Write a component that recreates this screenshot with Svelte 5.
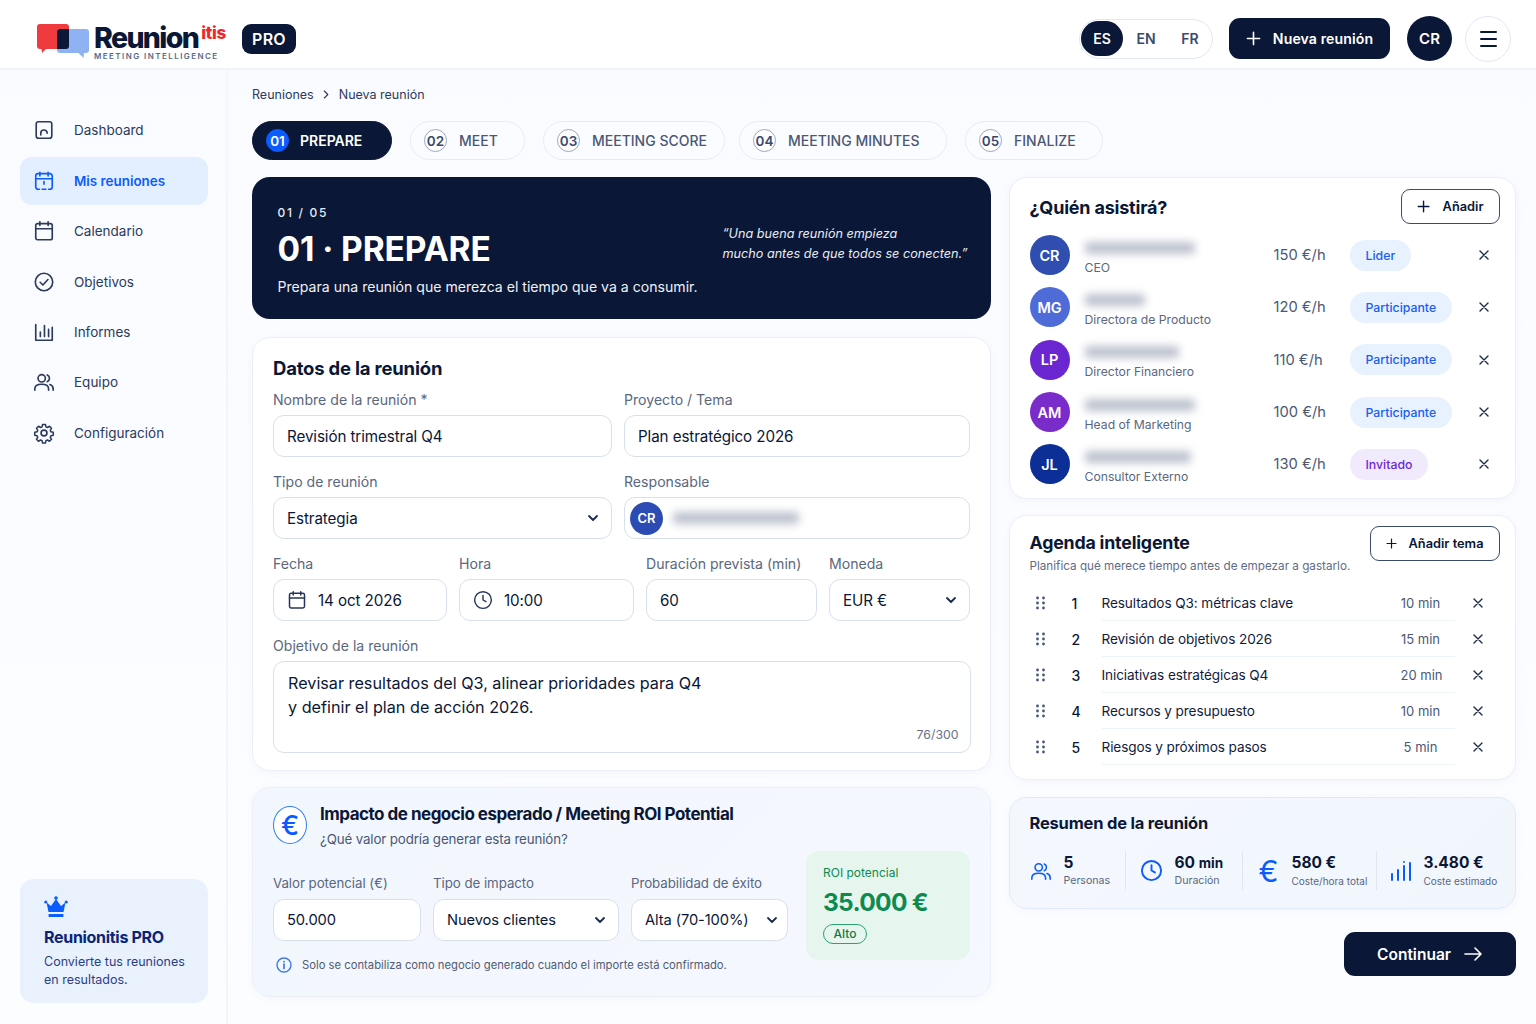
<script>
  const nav = [
    { label: 'Dashboard', icon: 'dash' },
    { label: 'Mis reuniones', icon: 'meet', active: true },
    { label: 'Calendario', icon: 'cal' },
    { label: 'Objetivos', icon: 'check' },
    { label: 'Informes', icon: 'chart' },
    { label: 'Equipo', icon: 'team' },
    { label: 'Configuración', icon: 'gear' }
  ];
  const steps = [
    { n: '01', t: 'PREPARE', active: true },
    { n: '02', t: 'MEET' },
    { n: '03', t: 'MEETING SCORE' },
    { n: '04', t: 'MEETING MINUTES' },
    { n: '05', t: 'FINALIZE' }
  ];
  const people = [
    { i: 'CR', w: 110, role: 'CEO', rate: '150 €/h', tag: 'Lider', kind: 'blue', c: 'cr' },
    { i: 'MG', w: 60, role: 'Directora de Producto', rate: '120 €/h', tag: 'Participante', kind: 'blue', c: 'mg' },
    { i: 'LP', w: 94, role: 'Director Financiero', rate: '110 €/h', tag: 'Participante', kind: 'blue', c: 'lp' },
    { i: 'AM', w: 110, role: 'Head of Marketing', rate: '100 €/h', tag: 'Participante', kind: 'blue', c: 'am' },
    { i: 'JL', w: 106, role: 'Consultor Externo', rate: '130 €/h', tag: 'Invitado', kind: 'purple', c: 'jl' }
  ];
  const agenda = [
    ['1', 'Resultados Q3: métricas clave', '10 min'],
    ['2', 'Revisión de objetivos 2026', '15 min'],
    ['3', 'Iniciativas estratégicas Q4', '20 min'],
    ['4', 'Recursos y presupuesto', '10 min'],
    ['5', 'Riesgos y próximos pasos', '5 min']
  ];
</script>

{#snippet chevron()}
  <svg class="chev" viewBox="0 0 12 12" width="12" height="12"><path d="M2 4l4 4 4-4" fill="none" stroke="currentColor" stroke-width="1.8" stroke-linecap="round" stroke-linejoin="round"/></svg>
{/snippet}
{#snippet plus(size = 16)}
  <svg viewBox="0 0 16 16" width={size} height={size}><path d="M8 1.500v13M1.500 8h13" fill="none" stroke="currentColor" stroke-width="1.700" stroke-linecap="round"/></svg>
{/snippet}
{#snippet cross()}
  <svg viewBox="0 0 10 10" width="10" height="10"><path d="M1 1l8 8M9 1l-8 8" fill="none" stroke="currentColor" stroke-width="1.400" stroke-linecap="round"/></svg>
{/snippet}
{#snippet clock(size = 20, sw = 1.7)}
  <svg viewBox="0 0 24 24" width={size} height={size} fill="none" stroke="currentColor" stroke-width={sw} stroke-linecap="round" stroke-linejoin="round"><circle cx="12" cy="12" r="10"/><path d="M12 6.500V12l3.500 2"/></svg>
{/snippet}
{#snippet team(size = 22, sw = 1.7)}
  <svg viewBox="0 0 24 24" width={size} height={size} fill="none" stroke="currentColor" stroke-width={sw} stroke-linecap="round" stroke-linejoin="round"><circle cx="9.500" cy="8" r="4"/><path d="M2 21v-1.500C2 16 5 14.500 9.500 14.500S17 16 17 19.500V21M15.500 4.300a4 4 0 0 1 0 7.400M18.500 14.800c2.200.7 3.500 2.200 3.500 4.700V21"/></svg>
{/snippet}
{#snippet navIcon(k)}
  <svg viewBox="0 0 24 24" width="22" height="22" fill="none" stroke="currentColor" stroke-width="1.800" stroke-linecap="round" stroke-linejoin="round">
    {#if k === 'dash'}
      <rect x="3.500" y="3" width="17" height="18" rx="2.500"/><path d="M8.500 17.500v-2a3.500 3.500 0 0 1 7 0"/>
    {:else if k === 'meet'}
      <path d="M7.500 2.500v4M16.500 2.500v4M3 9.500h18M7 21H5.500A2.500 2.500 0 0 1 3 18.500v-12A2.500 2.500 0 0 1 5.500 4h13A2.500 2.500 0 0 1 21 6.500v12a2.500 2.500 0 0 1-2.500 2.500H17M12 12.500v3M10 21h4"/>
    {:else if k === 'cal'}
      <rect x="3" y="4" width="18" height="17.500" rx="2"/><path d="M7.500 2v4M16.500 2v4M3 9.500h18"/>
    {:else if k === 'check'}
      <circle cx="12" cy="12" r="9.500"/><path d="M7.800 12.300l3 3 5.500-6"/>
    {:else if k === 'chart'}
      <path d="M3 4v17h18V7M8 17v-5M12.500 17V5M17 17v-8"/>
    {:else if k === 'team'}
      <circle cx="9.500" cy="8" r="4"/><path d="M2 21v-1.500C2 16 5 14.500 9.500 14.500S17 16 17 19.500V21M15.500 4.300a4 4 0 0 1 0 7.400M18.500 14.800c2.200.7 3.500 2.200 3.500 4.700V21"/>
    {:else}
      <circle cx="12" cy="12" r="3.200"/><path d="M10.300 2.500h3.400l.6 2.800 1.800.8 2.500-1.500 2.300 2.400-1.500 2.400.8 1.800 2.800.6v3.400l-2.800.6-.8 1.800 1.500 2.500-2.400 2.300-2.400-1.500-1.800.8-.6 2.800h-3.400l-.6-2.800-1.800-.8-2.500 1.500-2.300-2.400 1.500-2.400-.8-1.800-2.800-.6v-3.400l2.800-.6.8-1.800-1.500-2.500 2.400-2.300 2.400 1.500 1.800-.8z" transform="translate(12 12) scale(.92) translate(-12 -12.600)"/>
    {/if}
  </svg>
{/snippet}

<div class="page">
  <header class="top">
    <div class="brand">
      <div class="mark">
        <svg viewBox="0 0 52 36" width="52" height="36">
          <path d="M3 1h26a3 3 0 0 1 3 3v19a3 3 0 0 1-3 3H9l-4 4-.5-4H3a3 3 0 0 1-3-3V4a3 3 0 0 1 3-3z" fill="#ef3b3f"/>
          <path d="M23 6h26a3 3 0 0 1 3 3v18a3 3 0 0 1-3 3h-2l-.5 5-5-5H23a3 3 0 0 1-3-3V9a3 3 0 0 1 3-3z" fill="#8fb2f2"/>
          <path d="M23 6h9v17a3 3 0 0 1-3 3h-9V9a3 3 0 0 1 3-3z" fill="#0b1736"/>
        </svg>
      </div>
      <div class="word">
        <div class="wordline"><span class="reunion">Reunion</span><span class="itis">itis</span></div>
        <div class="tagline">MEETING INTELLIGENCE</div>
      </div>
      <span class="pro">PRO</span>
    </div>
    <div class="actions">
      <div class="langs"><span class="lang on">ES</span><span class="lang">EN</span><span class="lang">FR</span></div>
      <button class="new">{@render plus(15)}<span>Nueva reunión</span></button>
      <span class="me">CR</span>
      <span class="burger"><i></i><i></i><i></i></span>
    </div>
  </header>

  <div class="body">
    <aside class="side">
      <nav class="nav">
        {#each nav as n}
          <div class="nav-item" class:on={n.active}>
            <span class="nav-ico">{@render navIcon(n.icon)}</span>
            <span>{n.label}</span>
          </div>
        {/each}
      </nav>
      <div class="promo">
        <svg viewBox="0 0 24 22" width="24" height="22" fill="#0b5cff"><circle cx="12" cy="2" r="1.800"/><circle cx="1.800" cy="6" r="1.600"/><circle cx="22.200" cy="6" r="1.600"/><path d="M2.500 6.500L7 10l5-7 5 7 4.500-3.500L19.500 16h-15z"/><rect x="4.500" y="18" width="15" height="3" rx=".8"/></svg>
        <div class="promo-t">Reunionitis PRO</div>
        <div class="promo-d">Convierte tus reuniones<br />en resultados.</div>
      </div>
    </aside>

    <main class="main">
      <div class="crumbs"><span>Reuniones</span><svg viewBox="0 0 8 10" width="7" height="9"><path d="M1.500 1l4 4-4 4" fill="none" stroke="currentColor" stroke-width="1.300" stroke-linecap="round" stroke-linejoin="round"/></svg><span>Nueva reunión</span></div>

      <div class="steps">
        {#each steps as s}
          <div class="step" class:on={s.active}><span class="num">{s.n}</span><span>{s.t}</span></div>
        {/each}
      </div>

      <div class="cols">
        <div class="left">
          <section class="hero">
            <div>
              <div class="eyebrow">01 / 05</div>
              <h1>01 · PREPARE</h1>
              <p>Prepara una reunión que merezca el tiempo que va a consumir.</p>
            </div>
            <blockquote>“Una buena reunión empieza<br />mucho antes de que todos se conecten.”</blockquote>
          </section>

          <section class="card form">
            <h2>Datos de la reunión</h2>
            <div class="row r1">
              <div class="field"><label for="a1">Nombre de la reunión *</label><div id="a1" class="input">Revisión trimestral Q4</div></div>
              <div class="field"><label for="a2">Proyecto / Tema</label><div id="a2" class="input">Plan estratégico 2026</div></div>
            </div>
            <div class="row r1">
              <div class="field"><label for="a3">Tipo de reunión</label><div id="a3" class="input sel">Estrategia{@render chevron()}</div></div>
              <div class="field"><label for="a4">Responsable</label><div id="a4" class="input resp"><span class="av-s">CR</span><span class="blur" style="width:126px"></span></div></div>
            </div>
            <div class="row r2">
              <div class="field"><label for="a5">Fecha</label><div id="a5" class="input ico"><span class="inl">{@render navIcon('cal')}</span>14 oct 2026</div></div>
              <div class="field"><label for="a6">Hora</label><div id="a6" class="input ico"><span class="inl">{@render clock(20)}</span>10:00</div></div>
              <div class="field"><label for="a7">Duración prevista (min)</label><div id="a7" class="input">60</div></div>
              <div class="field"><label for="a8">Moneda</label><div id="a8" class="input sel">EUR €{@render chevron()}</div></div>
            </div>
            <div class="field">
              <label for="a9">Objetivo de la reunión</label>
              <div id="a9" class="textarea">Revisar resultados del Q3, alinear prioridades para Q4<br />y definir el plan de acción 2026.<span class="count">76/300</span></div>
            </div>
          </section>

          <section class="card roi">
            <div class="roi-head">
              <span class="euro">€</span>
              <div>
                <h3>Impacto de negocio esperado / Meeting ROI Potential</h3>
                <div class="roi-sub">¿Qué valor podría generar esta reunión?</div>
              </div>
            </div>
            <div class="roi-fields">
              <div class="field"><label for="b1">Valor potencial (€)</label><div id="b1" class="input">50.000</div></div>
              <div class="field"><label for="b2">Tipo de impacto</label><div id="b2" class="input sel">Nuevos clientes{@render chevron()}</div></div>
              <div class="field"><label for="b3">Probabilidad de éxito</label><div id="b3" class="input sel tightsel">Alta (70-100%){@render chevron()}</div></div>
            </div>
            <div class="roi-box">
              <div class="roi-l">ROI potencial</div>
              <div class="roi-v">35.000 €</div>
              <span class="roi-t">Alto</span>
            </div>
            <div class="note">
              <svg viewBox="0 0 16 16" width="16" height="16" fill="none" stroke="#3f78e8" stroke-width="1.400"><circle cx="8" cy="8" r="7"/><path d="M8 7.200v4.200" stroke-width="1.700" stroke-linecap="round"/><circle cx="8" cy="4.700" r=".9" fill="#3f78e8" stroke="none"/></svg>
              <span>Solo se contabiliza como negocio generado cuando el importe está confirmado.</span>
            </div>
          </section>
        </div>

        <div class="right">
          <section class="card who">
            <div class="who-head">
              <h2>¿Quién asistirá?</h2>
              <button class="ghost">{@render plus(15)}<span>Añadir</span></button>
            </div>
            <div class="people">
              {#each people as p}
                <div class="person">
                  <span class="avatar {p.c}">{p.i}</span>
                  <div class="pinfo"><span class="blur" style="width:{p.w}px"></span><span class="role">{p.role}</span></div>
                  <span class="rate">{p.rate}</span>
                  <span class="tagcell"><span class="tag {p.kind}">{p.tag}</span></span>
                  <span class="x">{@render cross()}</span>
                </div>
              {/each}
            </div>
          </section>

          <section class="card agenda">
            <div class="ag-head">
              <div>
                <h2>Agenda inteligente</h2>
                <div class="ag-sub">Planifica qué merece tiempo antes de empezar a gastarlo.</div>
              </div>
              <button class="ghost">{@render plus(15)}<span>Añadir tema</span></button>
            </div>
            <div class="ag-list">
              {#each agenda as a}
                <div class="ag-row">
                  <svg class="drag" viewBox="0 0 9 14" width="9" height="14" fill="#46557a"><circle cx="1.500" cy="2" r="1.400"/><circle cx="7.500" cy="2" r="1.400"/><circle cx="1.500" cy="7" r="1.400"/><circle cx="7.500" cy="7" r="1.400"/><circle cx="1.500" cy="12" r="1.400"/><circle cx="7.500" cy="12" r="1.400"/></svg>
                  <span class="ag-n">{a[0]}</span>
                  <div class="ag-main"><span class="ag-t">{a[1]}</span><span class="ag-m">{a[2]}</span></div>
                  <span class="x">{@render cross()}</span>
                </div>
              {/each}
            </div>
          </section>

          <section class="card sum">
            <h2>Resumen de la reunión</h2>
            <div class="stats">
              <div class="stat s1"><span class="sico">{@render team(22)}</span><div><b>5</b><small>Personas</small></div></div>
              <div class="stat s2"><span class="sico">{@render clock(23, 2)}</span><div><b>60 <em>min</em></b><small>Duración</small></div></div>
              <div class="stat s3"><span class="sico eur">€</span><div><b>580 €</b><small>Coste/hora total</small></div></div>
              <div class="stat s4"><span class="sico"><svg viewBox="0 0 22 22" width="22" height="22" fill="none" stroke="currentColor" stroke-width="2" stroke-linecap="round"><path d="M2 20v-6M8 20v-10M14 20V6M14 2v.01M20 20V3"/></svg></span><div><b>3.480 €</b><small>Coste estimado</small></div></div>
            </div>
          </section>

          <div class="cta">
            <button class="go"><span>Continuar</span><svg viewBox="0 0 18 14" width="18" height="14" fill="none" stroke="currentColor" stroke-width="1.600" stroke-linecap="round" stroke-linejoin="round"><path d="M1 7h16M11 1l6 6-6 6"/></svg></button>
          </div>
        </div>
      </div>
    </main>
  </div>
</div>

<style>
  :global(body) { margin: 0; background: #fbfcff; }
  .page { width: 1536px; height: 1024px; overflow: hidden; font-family: Inter, "Liberation Sans", sans-serif; color: #0b1736; display: flex; flex-direction: column; background: linear-gradient(180deg, #f9fbff, #fcfdff); }
  h1, h2, h3, p, blockquote { margin: 0; }
  button { font-family: inherit; border: 0; padding: 0; cursor: pointer; }

  .top { height: 70px; box-sizing: border-box; flex: none; background: #fff; border-bottom: 2px solid #eff4fb; display: flex; align-items: center; justify-content: space-between; padding: 9px 25px 0 37px; }
  .brand { display: flex; align-items: center; }
  .mark { height: 36px; margin-right: 5px; margin-top: 5px; }
  .mark svg { display: block; }
  .word { width: 132px; margin-top: 10px; }
  .wordline { display: flex; align-items: flex-start; height: 24px; }
  .reunion { font-size: 28.500px; line-height: 24px; font-weight: 800; letter-spacing: -1.650px; color: #0b1736; }
  .itis { font-size: 17px; font-weight: 800; color: #f0282d; line-height: 14px; margin-left: 3px; letter-spacing: -.3px; }
  .tagline { font-size: 8px; font-weight: 600; letter-spacing: 1.430px; color: #5a6a8c; line-height: 10px; white-space: nowrap; margin-top: 1px; }
  .pro { margin-left: 16px; width: 54px; height: 30px; border-radius: 9px; background: #0b1736; color: #fff; font-size: 16px; font-weight: 600; display: flex; align-items: center; justify-content: center; letter-spacing: .3px; }
  .actions { display: flex; align-items: center; }
  .langs { width: 134px; height: 40px; box-sizing: border-box; border: 1.500px solid #e1e8f4; border-radius: 20px; display: flex; align-items: center; gap: 2px; padding-left: 1px; background: #fff; }
  .lang { width: 42px; height: 35px; border-radius: 18px; display: flex; align-items: center; justify-content: center; font-size: 14px; font-weight: 600; color: #3a4a6e; }
  .lang.on { background: #0b1736; color: #fff; }
  .new { margin-left: 16px; width: 161px; height: 41px; border-radius: 11px; background: #0b1736; color: #fff; display: flex; align-items: center; justify-content: center; gap: 12px; font-size: 14.100px; font-weight: 600; letter-spacing: .1px; }
  .me { margin-left: 17px; width: 45px; height: 45px; border-radius: 50%; background: #0b1736; color: #fff; font-size: 15px; font-weight: 600; display: flex; align-items: center; justify-content: center; }
  .burger { margin-left: 13px; width: 46px; height: 46px; box-sizing: border-box; border: 1.500px solid #e1e8f4; border-radius: 50%; display: flex; flex-direction: column; gap: 5px; align-items: center; justify-content: center; }
  .burger i { width: 17px; height: 2px; background: #0b1736; border-radius: 1px; }

  .body { flex: 1; display: flex; min-height: 0; }
  .side { width: 228px; box-sizing: border-box; flex: none; border-right: 2px solid #f1f5fc; padding: 35px 18px 21px 20px; display: flex; flex-direction: column; }
  .nav { display: flex; flex-direction: column; }
  .nav-item { height: 50.300px; display: flex; align-items: center; padding-left: 13px; gap: 19px; font-size: 13.500px; color: #2c3a5c; border-radius: 12px; }
  .nav-item.on { background: #e3effe; color: #0b5cff; font-weight: 600; height: 48px; margin: 2px 0 1px; font-size: 13.400px; }
  .nav-ico { display: flex; width: 22px; }
  .promo { margin-top: auto; height: 124px; box-sizing: border-box; border-radius: 14px; background: #e9f1fd; padding: 17px 10px 0 24px; }
  .promo svg { display: block; }
  .promo-t { font-size: 16px; font-weight: 700; letter-spacing: -.3px; color: #0a2478; line-height: 20px; margin-top: 9px; }
  .promo-d { font-size: 12.500px; line-height: 18px; color: #2b3f85; margin-top: 6px; white-space: nowrap; }

  .main { flex: 1; min-width: 0; box-sizing: border-box; padding: 15px 20px 0 24px; }
  .crumbs { height: 18px; display: flex; align-items: center; gap: 9px; font-size: 12.500px; color: #2c3a5c; }
  .steps { display: flex; gap: 18px; margin-top: 18px; }
  .step { height: 39px; box-sizing: border-box; border: 1.500px solid #e6ecf6; border-radius: 20px; padding-left: 13px; display: flex; align-items: center; gap: 12px; font-size: 14px; font-weight: 500; color: #4a5876; background: #fbfcff; white-space: nowrap; }
  .step:nth-child(1) { width: 140px; }
  .step:nth-child(2) { width: 115px; }
  .step:nth-child(3) { width: 182px; }
  .step:nth-child(4) { width: 208px; margin-left: -4px; }
  .step:nth-child(5) { width: 138px; }
  .step.on { background: #0b1736; border-color: #0b1736; color: #fff; font-weight: 600; gap: 11px; }
  .num { width: 23px; height: 23px; box-sizing: border-box; border: 1.200px solid #9aa7c0; border-radius: 50%; display: flex; align-items: center; justify-content: center; font-size: 13.500px; font-weight: 600; color: #3a4a6e; background: #fff; }
  .step.on .num { background: #0b5cff; border-color: #0b5cff; color: #fff; }

  .cols { display: grid; grid-template-columns: 739px 507px; column-gap: 18px; margin-top: 17px; margin-left: -.5px; }
  .left, .right { display: flex; flex-direction: column; }

  .card { box-sizing: border-box; background: #fff; border: 1.500px solid #ebf0f8; border-radius: 18px; box-shadow: 0 2px 8px rgba(40, 70, 130, .04); }
  h2 { font-size: 18.500px; font-weight: 700; line-height: 24px; letter-spacing: -.2px; color: #0b1736; }

  .hero { height: 142px; box-sizing: border-box; border-radius: 18px; background: #0b1736; color: #fff; padding: 28px 23px 0 26px; display: flex; justify-content: space-between; align-items: flex-start; }
  .eyebrow { font-size: 12px; font-weight: 500; letter-spacing: 1.700px; line-height: 16px; color: #e6ebf5; }
  h1 { font-size: 33.500px; font-weight: 700; line-height: 40px; letter-spacing: -.1px; margin-top: 8px; }
  .hero p { font-size: 14.100px; line-height: 20px; margin-top: 8px; color: #eef1f8; }
  blockquote { font-size: 12.650px; font-style: italic; line-height: 20px; color: #e8ecf5; margin-top: 19px; }

  .form { margin-top: 18px; height: 434px; padding: 18px 19px 0 20.500px; }
  .form h2 { margin-bottom: 10px; }
  .row { display: grid; column-gap: 12px; margin-bottom: 15px; }
  .r1 { grid-template-columns: 339px 346px; }
  .r2 { grid-template-columns: 174px 175px 171px 141px; }
  label { display: block; font-size: 14.100px; line-height: 19px; margin-bottom: 6px; color: #5a6780; white-space: nowrap; }
  .input { height: 42px; box-sizing: border-box; border: 1.500px solid #d8e0ee; border-radius: 11px; background: #fff; display: flex; align-items: center; padding: 0 12px 0 13px; font-size: 15.200px; color: #0b1736; white-space: nowrap; letter-spacing: -.1px; }
  .sel { justify-content: space-between; }
  .tightsel { padding-right: 9px; }
  .chev { color: #1c2a4c; flex: none; }
  .resp { padding-left: 5px; gap: 10px; }
  .av-s { width: 33px; height: 33px; border-radius: 50%; background: #2c4cb4; color: #fff; font-size: 13px; font-weight: 600; display: flex; align-items: center; justify-content: center; }
  .blur { display: block; height: 12px; background: #8f98ac; border-radius: 4px; filter: blur(4px); opacity: .6; }
  .ico { gap: 11px; padding-left: 13px; }
  .inl { display: flex; color: #26345a; }
  .inl :global(svg) { width: 20px; height: 20px; }
  .textarea { position: relative; height: 92px; box-sizing: border-box; border: 1.500px solid #d8e0ee; border-radius: 11px; padding: 9px 14px; font-size: 16.200px; line-height: 24px; color: #0b1736; }
  .count { position: absolute; right: 11px; bottom: 9px; font-size: 12.300px; line-height: 16px; color: #66728a; }

  .roi { margin-top: 16px; height: 210px; padding: 15px 20px 0 20.500px; background: linear-gradient(135deg, #f2f6fd, #f5f8fe); display: grid; grid-template-columns: 515px 164px; column-gap: 18px; grid-template-rows: 48px 109px auto; }
  .roi-head { grid-column: 1 / 3; grid-row: 1; display: flex; gap: 13px; }
  .euro { width: 34px; height: 38px; margin-top: 3px; box-sizing: border-box; border: 1.500px solid #2f7bf5; border-radius: 50%; background: #fff; color: #0b5cff; display: flex; align-items: center; justify-content: center; font-size: 27px; font-weight: 500; flex: none; }
  h3 { font-size: 17px; font-weight: 700; line-height: 22px; letter-spacing: -.5px; color: #0b1736; }
  .roi-sub { font-size: 13.300px; letter-spacing: -.12px; line-height: 18px; color: #4a5876; margin-top: 5px; }
  .roi-fields { grid-column: 1; grid-row: 2; display: grid; grid-template-columns: 148px 186px 157px; column-gap: 12px; padding-top: 23px; box-sizing: border-box; }
  .roi-fields label { font-size: 13.300px; letter-spacing: -.05px; }
  .roi-fields .input { font-size: 14.700px; }
  .roi-box { grid-column: 2; grid-row: 2 / 4; height: 109px; box-sizing: border-box; border-radius: 13px; background: #e6f6ef; padding: 13px 17px; }
  .roi-l { font-size: 12px; line-height: 18px; color: #0f8a4f; }
  .roi-v { font-size: 24.500px; font-weight: 700; line-height: 32px; color: #0f8a4f; margin-top: 4px; letter-spacing: -.7px; }
  .roi-t { display: inline-block; margin-top: 6px; width: 44px; box-sizing: border-box; text-align: center; border: 1.300px solid #2aa56d; border-radius: 11px; font-size: 12px; font-weight: 500; line-height: 18px; color: #0e7a45; }
  .note { grid-column: 1; grid-row: 3; display: flex; align-items: center; gap: 10px; font-size: 11.250px; color: #4f5c76; padding-left: 3px; margin-top: -8px; height: 26px; white-space: nowrap; }
  .note svg { flex: none; }

  .who { height: 322px; padding: 11px 15px 0 20px; }
  .who-head { display: flex; justify-content: space-between; align-items: center; height: 35px; margin-bottom: 5px; }
  .who-head h2 { font-size: 18px; margin-top: 3px; }
  .ghost { height: 35px; box-sizing: border-box; border: 1.500px solid #3c4a6c; border-radius: 9px; background: #fff; color: #0b1736; display: flex; align-items: center; gap: 13px; padding: 0 15px; font-size: 12.800px; font-weight: 600; white-space: nowrap; }
  .who-head .ghost { width: 99px; }
  .people { display: flex; flex-direction: column; }
  .person { height: 52.300px; display: grid; grid-template-columns: 55px 189px 76px 127px 14px; align-items: center; flex: none; }
  .avatar { width: 40px; height: 40px; border-radius: 50%; color: #fff; font-size: 14.500px; font-weight: 600; display: flex; align-items: center; justify-content: center; }
  .cr { background: #2f4eb0; }
  .mg { background: #4f6bd8; }
  .lp { background: #6a26d1; }
  .am { background: #7a2ccb; }
  .jl { background: #0b2f96; }
  .pinfo { display: flex; flex-direction: column; gap: 6px; padding-top: 7px; }
  .role { font-size: 12.200px; line-height: 16px; color: #5a6780; white-space: nowrap; }
  .rate { font-size: 14.700px; color: #4a5876; white-space: nowrap; }
  .tagcell { display: flex; }
  .tag { height: 31px; border-radius: 15.500px; padding: 0 16px; display: flex; align-items: center; font-size: 12.300px; font-weight: 500; }
  .tag.blue { background: #e7f2fe; color: #1a5ff0; }
  .tag.purple { background: #f1eafd; color: #6d28d9; }
  .x { display: flex; justify-content: center; color: #1f2c4e; }

  .agenda { margin-top: 16px; height: 265px; padding: 10px 15px 0 20px; }
  .ag-head { display: flex; justify-content: space-between; align-items: flex-start; height: 59px; }
  .ag-head h2 { font-size: 17.800px; line-height: 24px; margin-top: 5px; }
  .ag-sub { font-size: 11.700px; line-height: 16px; color: #5f6c86; margin-top: 3px; white-space: nowrap; }
  .ag-head .ghost { width: 130px; gap: 12px; }
  .ag-row { height: 36px; display: flex; align-items: center; }
  .drag { margin-left: 6px; flex: none; }
  .ag-n { width: 20px; margin-left: 27px; font-size: 14px; font-weight: 500; flex: none; }
  .ag-main { width: 353px; margin-left: 10px; height: 36px; box-sizing: border-box; border-bottom: 1.500px solid #eef2f9; display: flex; align-items: center; justify-content: space-between; padding-right: 14px; flex: none; }
  .ag-t { font-size: 13.600px; letter-spacing: -.1px; color: #0f1c3e; }
  .ag-m { width: 40px; text-align: center; font-size: 13px; color: #4a5876; white-space: nowrap; }
  .ag-row .x { margin-left: 18px; }

  .sum { margin-top: 17px; height: 112px; padding: 13px 10px 0 20px; background: linear-gradient(135deg, #f4f8fe, #f1f6fd); border-color: #e1ebf8; }
  .sum h2 { font-size: 16.500px; line-height: 24px; }
  .stats { display: flex; margin-top: 16px; }
  .stat { display: flex; height: 39px; align-items: center; box-sizing: border-box; border-right: 1px solid #dfe7f3; }
  .stat:last-child { border-right: 0; }
  .s1 { width: 96px; gap: 12px; }
  .s2 { width: 117px; padding-left: 14px; gap: 12px; }
  .s3 { width: 134px; padding-left: 16px; gap: 14px; }
  .s4 { padding-left: 13px; gap: 12px; }
  .sico { color: #0b5cff; display: flex; flex: none; }
  .eur { font-size: 30px; line-height: 30px; font-weight: 400; width: 19px; }
  .stat b { display: block; font-size: 15.500px; line-height: 20px; font-weight: 700; white-space: nowrap; }
  .stat em { font-style: normal; font-size: 13.500px; }
  .stat small { display: block; font-size: 10.600px; line-height: 16px; color: #5a6780; white-space: nowrap; }
  .s3 small, .s4 small { font-size: 10px; }

  .cta { display: flex; justify-content: flex-end; margin-top: 23px; }
  .go { width: 172px; height: 44px; border-radius: 11px; background: #0b1736; color: #fff; display: flex; align-items: center; justify-content: center; gap: 13px; font-size: 15.500px; font-weight: 600; }
</style>
